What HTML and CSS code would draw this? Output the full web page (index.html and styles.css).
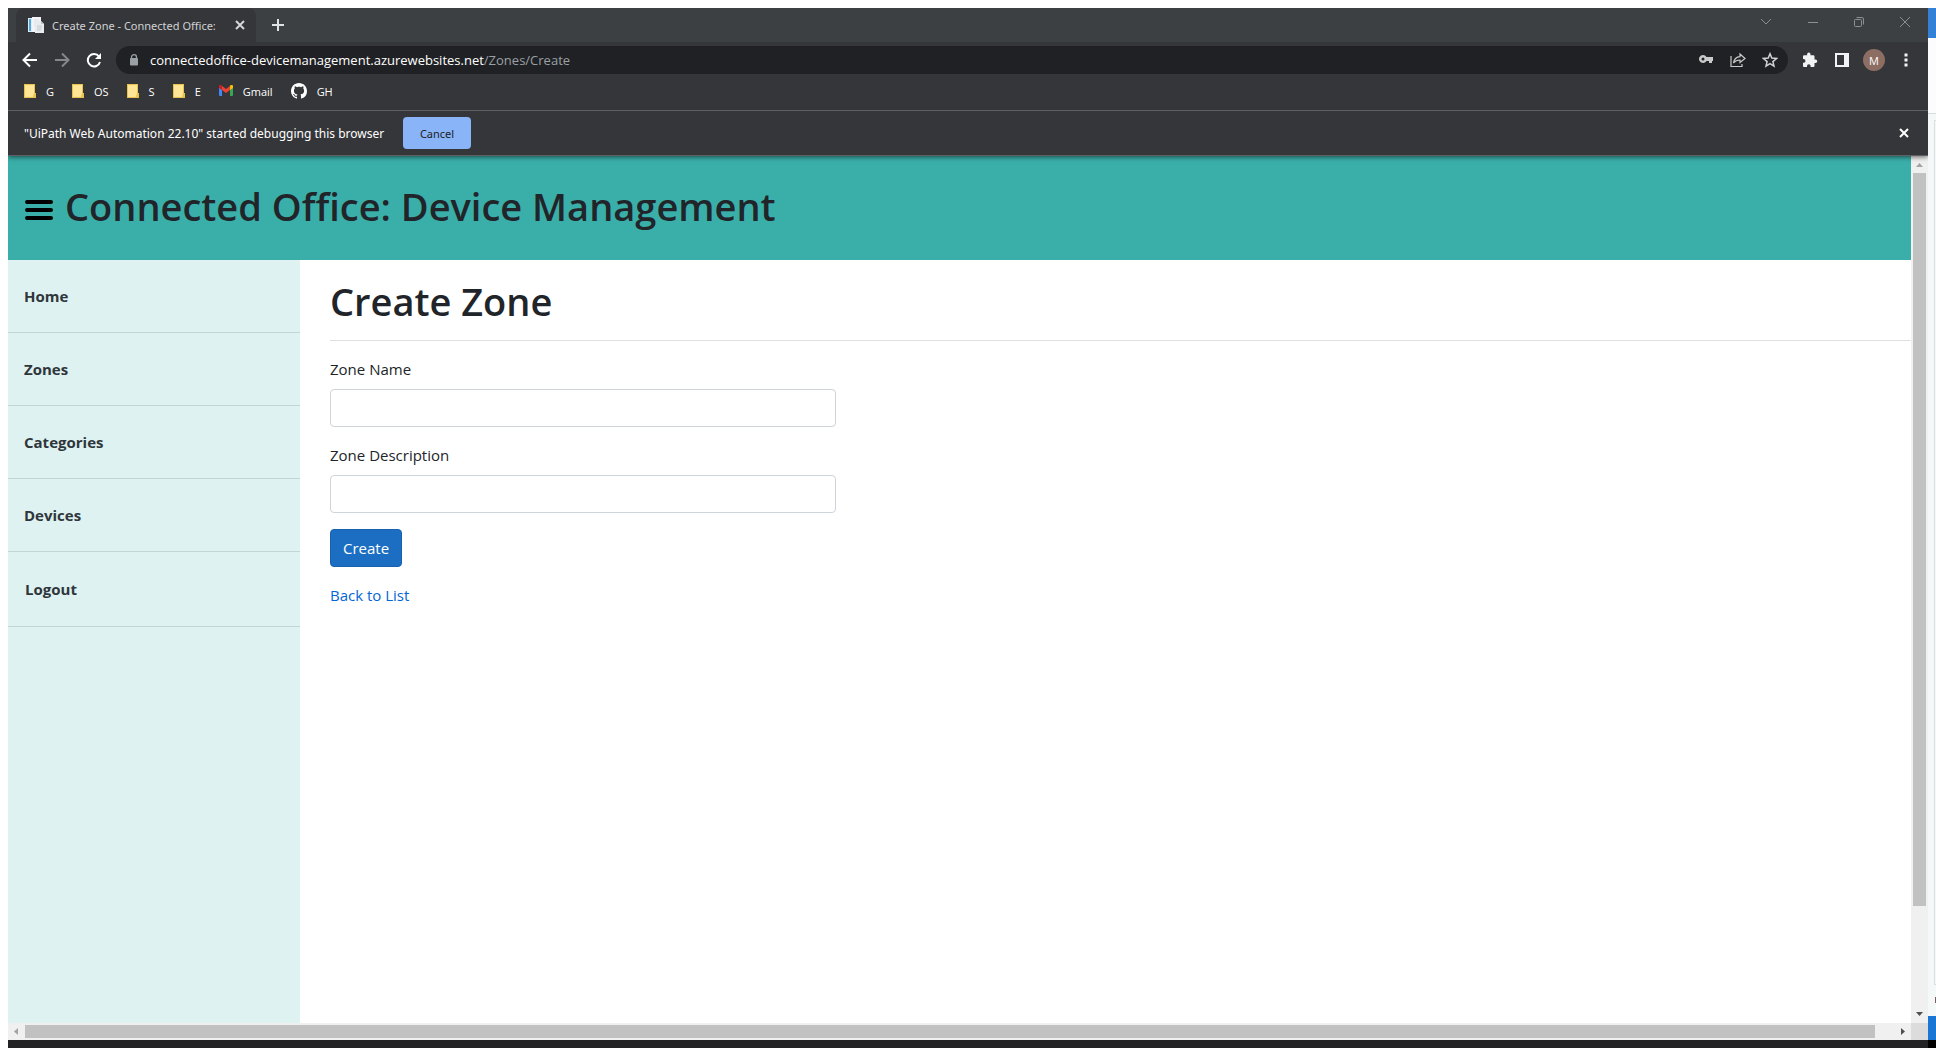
FILE: index.html
```html
<!DOCTYPE html>
<html lang="en">
<head>
<meta charset="utf-8">
<meta name="viewport" content="width=device-width, initial-scale=1">
<title>Create Zone - Connected Office: Device Management</title>
<link rel="stylesheet" href="styles.css">
</head>
<body>
<div class="desktop">
  <div class="browser">
    <header class="chrome">
      <div class="tabstrip">
        <div class="tab">
          <svg class="favicon" width="16" height="16" viewBox="0 0 16 16"><path d="M0 1h5v14H0z" fill="#d9eefb"/><path d="M1 2h2v12H1z" fill="#5ba7d8"/><path d="M4 0h9v15H4z" fill="#f2f4f5"/><path d="M6 3h5M6 5h5M6 7h5M6 9h3" stroke="#dde1e4"/><path d="M7 4h6l3 3v9H7z" fill="#e9ecee"/><path d="M13 4v3h3" fill="#bcc5cb"/><path d="M9 9h5M9 11h5M9 13h4" stroke="#c3cacf"/></svg>
          <span class="tab-title">Create Zone - Connected Office:</span>
          <button class="icon-btn" aria-label="Close tab"><svg width="10" height="10" viewBox="0 0 10 10"><path d="M1 1l8 8M9 1l-8 8" stroke="#d4d6d8" stroke-width="2"/></svg></button>
        </div>
        <button class="icon-btn new-tab" aria-label="New tab"><svg width="12" height="12" viewBox="0 0 12 12"><path d="M6 0v12M0 6h12" stroke="#e0e2e3" stroke-width="2"/></svg></button>
        <div class="window-controls">
          <button class="icon-btn" aria-label="Search tabs"><svg width="12" height="12" viewBox="0 0 12 12"><path d="M1 3l5 5 5-5" fill="none" stroke="#8c9092"/></svg></button>
          <button class="icon-btn" aria-label="Minimize"><svg width="10" height="10" viewBox="0 0 10 10"><path d="M0 5.500h10" stroke="#8c9092"/></svg></button>
          <button class="icon-btn" aria-label="Restore"><svg width="10" height="10" viewBox="0 0 10 10"><rect x=".5" y="2.500" width="7" height="7" rx="1" fill="none" stroke="#8c9092"/><path d="M2.500.5H8A1.500 1.500 0 0 1 9.500 2v5.500" fill="none" stroke="#8c9092"/></svg></button>
          <button class="icon-btn" aria-label="Close window"><svg width="10" height="10" viewBox="0 0 10 10"><path d="M0 0l10 10M10 0L0 10" stroke="#8c9092"/></svg></button>
        </div>
      </div>
      <div class="toolbar">
        <button class="icon-btn" aria-label="Back"><svg width="16" height="16" viewBox="0 0 16 16"><path d="M15 8H2M8 1.500L1.500 8 8 14.500" fill="none" stroke="#fff" stroke-width="2"/></svg></button>
        <button class="icon-btn" aria-label="Forward"><svg width="16" height="16" viewBox="0 0 16 16"><path d="M1 8h13M8 1.500L14.500 8 8 14.500" fill="none" stroke="#85878a" stroke-width="2"/></svg></button>
        <button class="icon-btn" aria-label="Reload"><svg width="16" height="16" viewBox="0 0 16 16"><path d="M13 4.500A6.200 6.200 0 1 0 14 10" fill="none" stroke="#fff" stroke-width="2"/><path d="M15 1v6H9z" fill="#fff"/></svg></button>
        <div class="address">
          <svg width="10" height="12" viewBox="0 0 10 12"><path d="M2.500 5V3.200a2.500 2.500 0 0 1 5 0V5" fill="none" stroke="#9aa0a6" stroke-width="1.300"/><rect x="1" y="4" width="8" height="7.500" rx="1" fill="#9aa0a6"/></svg>
          <span class="url"><span class="host">connectedoffice-devicemanagement.azurewebsites.net</span>/Zones/Create</span>
          <button class="icon-btn" aria-label="Passwords"><svg width="16" height="16" viewBox="0 0 16 16"><path d="M5 3a4 4 0 1 0 3.500 6H11v2h3V9h1V5H8.500A4 4 0 0 0 5 3zm0 2.500a1.500 1.500 0 1 1 0 3 1.500 1.500 0 0 1 0-3z" fill="#c8cacc"/></svg></button>
          <button class="icon-btn" aria-label="Share"><svg width="16" height="16" viewBox="0 0 16 16"><path d="M1 4v10.500h11V12M10 2l5 4.500-5 4V8C6.500 8 5 9 3.500 11 4 7.500 6 5 10 4.700z" fill="none" stroke="#c8cacc" stroke-width="1.200"/></svg></button>
          <button class="icon-btn" aria-label="Bookmark"><svg width="16" height="16" viewBox="0 0 16 16"><path d="M8 1.800l1.800 4.300 4.700.4-3.600 3.100 1.100 4.600L8 11.700l-4 2.500 1.100-4.600-3.600-3.100 4.700-.4z" fill="none" stroke="#d0d2d4" stroke-width="1.500"/></svg></button>
        </div>
        <button class="icon-btn" aria-label="Extensions"><svg width="16" height="16" viewBox="0 0 16 16"><path d="M13.500 7.500h-1V4.500a1.300 1.300 0 0 0-1.300-1.300H8.500v-1a1.700 1.700 0 0 0-3.400 0v1H2.400A1.300 1.300 0 0 0 1 4.500v2.600h1a1.900 1.900 0 0 1 0 3.700H1v2.700A1.300 1.300 0 0 0 2.400 15H5v-1a1.800 1.800 0 0 1 3.600 0v1h2.600a1.300 1.300 0 0 0 1.300-1.500V11h1a1.700 1.700 0 0 0 0-3.500z" fill="#f1f3f4"/></svg></button>
        <button class="icon-btn" aria-label="Side panel"><svg width="16" height="16" viewBox="0 0 16 16"><path d="M1 1h14v14H1zM3 3v10h7V3z" fill="#f1f3f4" fill-rule="evenodd"/></svg></button>
        <button class="avatar" aria-label="Profile">M</button>
        <button class="icon-btn" aria-label="Menu"><svg width="4" height="14" viewBox="0 0 4 14"><path d="M.5.5h3v3h-3zM.5 5.500h3v3h-3zM.5 10.500h3v3h-3z" fill="#f1f3f4"/></svg></button>
      </div>
      <nav class="bookmarks" aria-label="Bookmarks">
        <a href="#"><svg width="12" height="14" viewBox="0 0 12 14"><path d="M0 0h11v9h1v5H0z" fill="#e8c24a"/><path d="M1 1h9v8l-1 4H1z" fill="#ffe595"/></svg>G</a>
        <a href="#"><svg width="12" height="14" viewBox="0 0 12 14"><path d="M0 0h11v9h1v5H0z" fill="#e8c24a"/><path d="M1 1h9v8l-1 4H1z" fill="#ffe595"/></svg>OS</a>
        <a href="#"><svg width="12" height="14" viewBox="0 0 12 14"><path d="M0 0h11v9h1v5H0z" fill="#e8c24a"/><path d="M1 1h9v8l-1 4H1z" fill="#ffe595"/></svg>S</a>
        <a href="#"><svg width="12" height="14" viewBox="0 0 12 14"><path d="M0 0h11v9h1v5H0z" fill="#e8c24a"/><path d="M1 1h9v8l-1 4H1z" fill="#ffe595"/></svg>E</a>
        <a href="#"><svg width="14" height="12" viewBox="0 0 14 12"><path d="M0 2l3 2v7H1a1 1 0 0 1-1-1z" fill="#4285f4"/><path d="M14 2l-3 2v7h2a1 1 0 0 0 1-1z" fill="#34a853"/><path d="M3 1l4 3 4-3v4L7 8 3 5z" fill="#ea4335"/><path d="M0 3V2a1.500 1.500 0 0 1 3-1v4z" fill="#c5221f"/><path d="M14 3V2a1.500 1.500 0 0 0-3-1v4z" fill="#fbbc04"/></svg>Gmail</a>
        <a href="#"><svg width="16" height="16" viewBox="0 0 16 16"><path fill="#fff" d="M8 0C3.580 0 0 3.580 0 8c0 3.540 2.290 6.530 5.470 7.590.4.070.55-.17.55-.38 0-.19-.01-.82-.01-1.490-2.010.37-2.530-.49-2.690-.94-.09-.23-.48-.94-.82-1.130-.28-.15-.68-.52-.01-.53.63-.01 1.080.58 1.230.82.72 1.210 1.870.87 2.330.66.07-.52.28-.87.51-1.070-1.780-.2-3.640-.89-3.640-3.950 0-.87.31-1.590.82-2.150-.08-.2-.36-1.020.08-2.120 0 0 .67-.21 2.200.82.64-.18 1.320-.27 2-.27s1.360.09 2 .27c1.530-1.040 2.200-.82 2.200-.82.44 1.100.16 1.920.08 2.120.51.56.82 1.270.82 2.150 0 3.070-1.870 3.750-3.650 3.950.29.25.54.73.54 1.480 0 1.070-.01 1.930-.01 2.200 0 .21.15.46.55.38A8 8 0 0 0 16 8c0-4.420-3.580-8-8-8z"/></svg>GH</a>
      </nav>
      <div class="infobar">
        <span class="message">"UiPath Web Automation 22.10" started debugging this browser</span>
        <button class="cancel">Cancel</button>
        <button class="icon-btn dismiss" aria-label="Dismiss"><svg width="10" height="10" viewBox="0 0 10 10"><path d="M1 1l8 8M9 1l-8 8" stroke="#fff" stroke-width="2"/></svg></button>
      </div>
    </header>
    <div class="viewport">
      <div class="page">
        <header class="banner">
          <button class="menu-btn" aria-label="Toggle menu"><svg width="28" height="20" viewBox="0 0 28 20"><path d="M2 2h24M2 10h24M2 18h24" stroke="#000" stroke-width="4" stroke-linecap="round"/></svg></button>
          <h1>Connected Office: Device Management</h1>
        </header>
        <nav class="sidebar" aria-label="Main">
          <a href="#">Home</a>
          <a href="#">Zones</a>
          <a href="#">Categories</a>
          <a href="#">Devices</a>
          <button class="logout">Logout</button>
        </nav>
        <main class="content">
          <h1>Create Zone</h1>
          <hr>
          <form class="zone-form">
            <div class="field">
              <label for="zone-name">Zone Name</label>
              <input id="zone-name" type="text">
            </div>
            <div class="field">
              <label for="zone-description">Zone Description</label>
              <input id="zone-description" type="text">
            </div>
            <button class="create" type="button">Create</button>
          </form>
          <a class="back" href="#">Back to List</a>
        </main>
      </div>
      <div class="scroll-y">
        <svg width="7" height="4" viewBox="0 0 7 4"><path d="M0 4h7L3.500 0z" fill="#a3a3a3"/></svg>
        <div class="track"><div class="thumb"></div></div>
        <svg width="7" height="4" viewBox="0 0 7 4"><path d="M0 0h7L3.500 4z" fill="#505050"/></svg>
      </div>
      <div class="scroll-x">
        <svg width="4" height="7" viewBox="0 0 4 7"><path d="M4 0v7L0 3.500z" fill="#a3a3a3"/></svg>
        <div class="track"><div class="thumb"></div></div>
        <svg width="4" height="7" viewBox="0 0 4 7"><path d="M0 0v7l4-3.500z" fill="#505050"/></svg>
      </div>
      <div class="corner"></div>
    </div>
    <div class="below"></div>
  </div>
  <div class="behind">
    <div class="behind-title"></div>
    <div class="behind-bar"></div>
    <div class="behind-body"><div class="behind-panel"></div></div>
    <div class="behind-status"></div>
    <div class="below-edge"></div>
  </div>
</div>
</body>
</html>
```
FILE: styles.css
```css
* {
  box-sizing: border-box;
}

body {
  margin: 0;
  background: #fff;
  font-family: "Open Sans", "Noto Sans", sans-serif;
  color: #212529;
}

button {
  font-family: inherit;
  border: 0;
  padding: 0;
  background: none;
}

a {
  text-decoration: none;
}

svg {
  display: block;
  flex: none;
}

.desktop {
  display: grid;
  grid-template-columns: minmax(0, 1fr) 8px;
  height: 100vh;
  padding: 8px 0 0 8px;
}

.browser {
  display: flex;
  flex-direction: column;
  min-height: 0;
  overflow: hidden;
}

/* Browser chrome */

.chrome {
  position: relative;
  background: #35363a;
  color: #fff;
  font-size: 12px;
  border-bottom: 1px solid #5f5f64;
  box-shadow: 0 1px 5px rgba(0, 0, 0, .6);
}

.icon-btn {
  display: grid;
  place-items: center;
  flex: none;
}

.tabstrip {
  display: flex;
  align-items: center;
  height: 34px;
  padding: 0 18px 0 8px;
  background: #3c4043;
}

.tab {
  display: flex;
  align-items: center;
  width: 240px;
  height: 34px;
  padding: 0 11px 0 12px;
  border-radius: 8px 8px 0 0;
  background: #35363a;
  color: #d0d2d4;
  font-family: "Noto Sans", sans-serif;
  font-size: 11px;
}

.tab-title {
  flex: 1;
  margin: 0 8px;
  white-space: nowrap;
}

.new-tab {
  margin-left: 16px;
}

.window-controls {
  display: flex;
  align-items: center;
  gap: 36px;
  margin: -6px 0 0 auto;
}

.toolbar {
  display: flex;
  align-items: center;
  gap: 16px;
  height: 36px;
  padding: 0 20px 0 14px;
}

.address {
  flex: 1;
  display: flex;
  align-items: center;
  gap: 16px;
  height: 28px;
  margin: 0 -2px 0 -2px;
  padding: 0 10px 0 13px;
  border-radius: 14px;
  background: #202124;
}

.url {
  flex: 1;
  margin-left: -5px;
  color: #9aa0a6;
  font-size: 13px;
}

.host {
  color: #fff;
}

.avatar {
  width: 22px;
  height: 22px;
  margin: 0 3px 0 -3px;
  border-radius: 50%;
  background: #8d6e63;
  color: #fff;
  font-size: 11px;
}

.bookmarks {
  display: flex;
  align-items: center;
  gap: 18px;
  height: 33px;
  padding: 0 16px 6px;
  border-bottom: 1px solid #5f6064;
}

.bookmarks a {
  display: flex;
  align-items: center;
  gap: 10px;
  height: 28px;
  color: #fff;
  font-size: 11px;
}

.infobar {
  display: flex;
  align-items: center;
  gap: 12px;
  height: 44px;
  padding: 0 19px 0 16px;
  font-family: "Noto Sans", sans-serif;
}

.message {
  min-width: 367px;
}

.cancel {
  width: 68px;
  height: 32px;
  border-radius: 4px;
  background: #8ab4f8;
  color: #202124;
  font-size: 11px;
}

.dismiss {
  margin-left: auto;
}

/* Page area with its scroll bars */

.viewport {
  flex: 1;
  display: grid;
  grid-template-columns: minmax(0, 1fr) 17px;
  grid-template-rows: minmax(0, 1fr) 17px;
  min-height: 0;
}

.page {
  display: grid;
  grid-template-columns: 292px minmax(0, 1fr);
  grid-template-rows: 104px minmax(0, 1fr);
  background: #fff;
  font-size: 15px;
  line-height: 24px;
}

h1 {
  margin: 0;
  font-size: 38px;
  font-weight: 600;
  line-height: 48px;
}

.banner {
  grid-column: 1 / -1;
  display: flex;
  align-items: center;
  gap: 12px;
  padding: 0 17px 5px;
  background: #3aafa9;
}

.menu-btn {
  padding-top: 8px;
}

.sidebar {
  display: flex;
  flex-direction: column;
  background: #def2f1;
}

.sidebar a,
.logout {
  padding: 24px 16px;
  border-bottom: 1px solid #c1d6d5;
  color: #2f363b;
  font-size: 15px;
  font-weight: 700;
  line-height: 24px;
  text-align: left;
}

.logout {
  padding: 25px 17px;
}

.content {
  padding: 17px 0 0 30px;
}

hr {
  height: 1px;
  margin: 15px 0 16px;
  border: 0;
  background: #dfe0e1;
}

.zone-form {
  width: 32%;
}

.field {
  margin-bottom: 16px;
}

.field label {
  display: block;
  margin-bottom: 8px;
}

.field input {
  display: block;
  width: 100%;
  height: 38px;
  padding: 6px 12px;
  border: 1px solid #ced4da;
  border-radius: 4px;
  font: inherit;
}

.create {
  display: block;
  height: 38px;
  padding: 0 12px;
  margin-bottom: 16px;
  border: 1px solid #1861ac;
  border-radius: 4px;
  background: #1b6ec2;
  color: #fff;
  font-size: 15px;
}

.back {
  color: #0366d6;
}

.scroll-y,
.scroll-x {
  display: flex;
  align-items: center;
  gap: 6px;
  background: #f0f0f0;
}

.scroll-y {
  flex-direction: column;
  padding: 7px 0;
}

.scroll-x {
  gap: 7px;
  padding: 0 6px;
}

.track {
  flex: 1;
  align-self: stretch;
}

.thumb {
  background: #c1c1c1;
}

.scroll-y .thumb {
  width: 13px;
  height: 88%;
  margin: 0 auto;
}

.scroll-x .thumb {
  width: 99%;
  height: 13px;
  margin-top: 2px;
}

.corner {
  background: #dcdcdc;
}

.below {
  height: 8px;
  background: #232225;
}

/* Edge of the window that lies behind */

.behind {
  display: flex;
  flex-direction: column;
}

.behind-title {
  height: 30px;
  background: #3281d6;
}

.behind-bar {
  height: 76px;
  border-bottom: 1px solid #d8dbdb;
  background: #fcfcfc;
}

.behind-body {
  flex: 1;
  position: relative;
  padding: 6px 0 31px 6px;
  background: #f5f8f8;
}

.behind-body::after {
  content: "";
  position: absolute;
  right: 0;
  bottom: 13px;
  width: 1px;
  height: 6px;
  background: #7a6257;
}

.behind-panel {
  height: 100%;
  border: 1px solid #dcdfdf;
  border-right: 0;
}

.behind-status {
  height: 24px;
  background: #1976d2;
}

.below-edge {
  height: 8px;
  background: #000;
}
```
